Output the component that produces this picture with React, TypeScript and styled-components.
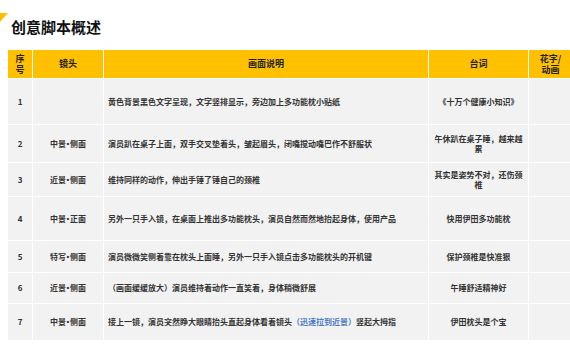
import React from "react";
import styled, { createGlobalStyle } from "styled-components";

const GlobalStyle = createGlobalStyle`
  html, body {
    margin: 0;
    padding: 0;
    background: #ffffff;
    overflow: hidden;
  }
  body {
    font-family: "Noto Sans CJK SC", "Liberation Sans", sans-serif;
  }
`;

const Page = styled.div`
  width: 570px;
  height: 360px;
  overflow: hidden;
`;

const Heading = styled.div`
  display: flex;
  align-items: flex-start;
  gap: 3px;
  padding-top: 13px;
`;

const Corner = styled.div`
  width: 0;
  height: 0;
  border-top: 9px solid #ffc000;
  border-right: 8px solid transparent;
`;

const Title = styled.h1`
  margin: 6px 0 0;
  font-size: 15px;
  line-height: 16px;
  font-weight: 700;
  color: #111111;
`;

const Table = styled.div`
  margin: 15px 0 0 8px;
  display: flex;
  flex-direction: column;
  gap: 1px;
  width: 565px;
`;

const Row = styled.div<{ $h: number }>`
  display: grid;
  grid-template-columns: 24px 70px 324px 99px 43px;
  gap: 1px;
  height: ${(p) => p.$h}px;
`;

const HeadCell = styled.div`
  background: #ffc000;
  display: flex;
  align-items: center;
  justify-content: center;
  text-align: center;
  font-size: 9px;
  line-height: 11.5px;
  font-weight: 700;
  color: #222222;
`;

const Cell = styled.div<{ $left?: boolean }>`
  background: #f2f2f2;
  display: flex;
  align-items: center;
  justify-content: ${(p) => (p.$left ? "flex-start" : "center")};
  text-align: ${(p) => (p.$left ? "left" : "center")};
  padding: 0 ${(p) => (p.$left ? "4px" : "5px")};
  font-size: 8px;
  line-height: 10px;
  font-weight: 700;
  color: #333333;
`;

const Dot = styled.span`
  font-family: "Liberation Sans", sans-serif;
  padding: 0 0.5px;
`;

const Highlight = styled.span`
  color: #4a78c8;
`;

type Scene = {
  no: string;
  shot: [string, string] | null;
  desc: React.ReactNode;
  line: string;
  h: number;
};

const scenes: Scene[] = [
  { no: "1", shot: null, desc: "黄色背景黑色文字呈现，文字竖排显示，旁边加上多功能枕小贴纸", line: "《十万个健康小知识》", h: 45 },
  { no: "2", shot: ["中景", "侧面"], desc: "演员趴在桌子上面，双手交叉垫着头，皱起眉头，闭嘴搅动嘴巴作不舒服状", line: "午休趴在桌子睡，越来越累", h: 37 },
  { no: "3", shot: ["近景", "侧面"], desc: "维持同样的动作，伸出手锤了锤自己的颈椎", line: "其实是姿势不对，还伤颈椎", h: 33 },
  { no: "4", shot: ["中景", "正面"], desc: "另外一只手入镜，在桌面上推出多功能枕头，演员自然而然地抬起身体，使用产品", line: "快用伊田多功能枕", h: 43 },
  { no: "5", shot: ["特写", "侧面"], desc: "演员微微笑侧着靠在枕头上面睡，另外一只手入镜点击多功能枕头的开机键", line: "保护颈椎是快准狠", h: 31 },
  { no: "6", shot: ["近景", "侧面"], desc: "（画面缓缓放大）演员维持着动作一直笑着，身体稍微舒展", line: "午睡舒适精神好", h: 30 },
  {
    no: "7",
    shot: ["中景", "侧面"],
    desc: (
      <>
        接上一镜，演员突然睁大眼睛抬头直起身体看着镜头<Highlight>（迅速拉到近景）</Highlight>竖起大拇指
      </>
    ),
    line: "伊田枕头是个宝",
    h: 36,
  },
];

const App = () => {
  return (
    <Page>
      <GlobalStyle />
      <Heading>
        <Corner />
        <Title>创意脚本概述</Title>
      </Heading>
      <Table>
        <Row $h={28}>
          <HeadCell>
            序<br />号
          </HeadCell>
          <HeadCell>镜头</HeadCell>
          <HeadCell>画面说明</HeadCell>
          <HeadCell>台词</HeadCell>
          <HeadCell>
            花字/
            <br />
            动画
          </HeadCell>
        </Row>
        {scenes.map((s) => (
          <Row key={s.no} $h={s.h}>
            <Cell>{s.no}</Cell>
            <Cell>
              {s.shot && (
                <>
                  {s.shot[0]}
                  <Dot>•</Dot>
                  {s.shot[1]}
                </>
              )}
            </Cell>
            <Cell $left>{s.desc}</Cell>
            <Cell>{s.line}</Cell>
            <Cell />
          </Row>
        ))}
      </Table>
    </Page>
  );
};

export default App;
